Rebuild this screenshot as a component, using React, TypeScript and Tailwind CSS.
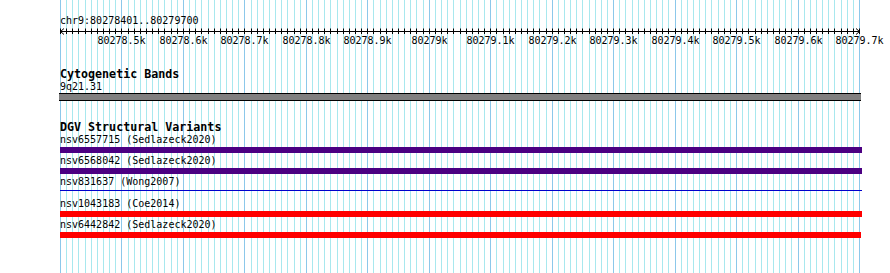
import React from "react";

const X0 = 60;
const X1 = 859;
const STEPS = 130;
const step = (X1 - X0) / STEPS;
const gridX = (k: number) => Math.round(X0 + k * step) + 0.5;

const ticks = Array.from({ length: STEPS + 1 }, (_, k) => k);
const labels = [
  "80278.5k",
  "80278.6k",
  "80278.7k",
  "80278.8k",
  "80278.9k",
  "80279k",
  "80279.1k",
  "80279.2k",
  "80279.3k",
  "80279.4k",
  "80279.5k",
  "80279.6k",
  "80279.7k",
];

type Variant = { name: string; source: string; kind: "bar" | "line"; color: string; width: number };

const variants: Variant[] = [
  { name: "nsv6557715", source: "Sedlazeck2020", kind: "bar", color: "bg-[#4b0082]", width: 802 },
  { name: "nsv6568042", source: "Sedlazeck2020", kind: "bar", color: "bg-[#4b0082]", width: 802 },
  { name: "nsv831637", source: "Wong2007", kind: "line", color: "bg-[#0000cc]", width: 802 },
  { name: "nsv1043183", source: "Coe2014", kind: "bar", color: "bg-[#ff0000]", width: 802 },
  { name: "nsv6442842", source: "Sedlazeck2020", kind: "bar", color: "bg-[#ff0000]", width: 801 },
];

function Grid() {
  return (
    <svg className="absolute inset-0" width={890} height={273}>
      {ticks.map((k) => (
        <line
          key={k}
          x1={gridX(k)}
          x2={gridX(k)}
          y1={0}
          y2={273}
          stroke={k % 10 === 0 ? "#8cc8ea" : "#a8e8ee"}
          strokeWidth={1}
        />
      ))}
    </svg>
  );
}

function Ruler() {
  return (
    <>
      <svg width={830} height={8} className="block">
        <line x1={0} x2={800} y1={4.5} y2={4.5} stroke="#000" />
        <polyline points="4,1.5 0.5,4.5 4,7.5" fill="none" stroke="#000" />
        <polyline points="796,1.5 799.5,4.5 796,7.5" fill="none" stroke="#000" />
        {ticks.map((k) => (
          <line key={k} x1={gridX(k) - X0} x2={gridX(k) - X0} y1={1.5} y2={7} stroke="#000" />
        ))}
      </svg>
      <div className="relative h-[12px]">
        {labels.map((l, i) => (
          <span
            key={l}
            className="absolute top-0 -translate-x-1/2 whitespace-pre"
            style={{ left: gridX((i + 1) * 10) - X0 }}
          >
            {l}
          </span>
        ))}
      </div>
    </>
  );
}

export default function App() {
  return (
    <div className="relative h-[273px] w-[890px] overflow-hidden bg-white font-['DejaVu_Sans_Mono',monospace] text-[10px] leading-[12px] text-black">
      <Grid />
      <div className="relative pl-[60px]">
        <div className="pt-[15px] whitespace-pre">chr9:80278401..80279700</div>
        <Ruler />

        <div className="mt-[21px] text-[11.67px] leading-[13px] font-bold whitespace-pre">Cytogenetic Bands</div>
        <div className="whitespace-pre">9q21.31</div>
        <div className="h-[8px] w-[802px] -ml-[1px] border-y border-black bg-[#808080]" />

        <div className="mt-[20px] text-[11.67px] leading-[13px] font-bold whitespace-pre">DGV Structural Variants</div>
        {variants.map((v, i) => (
          <div key={v.name} className={i === 0 ? "" : "mt-[2px]"}>
            <div className="whitespace-pre">
              {v.name} ({v.source})
            </div>
            <div className="mt-[1px] h-[6px]">
              {v.kind === "bar" ? (
                <div className={`h-[6px] ${v.color}`} style={{ width: v.width }} />
              ) : (
                <div className={`mt-[2px] h-[1px] ${v.color}`} style={{ width: v.width }} />
              )}
            </div>
          </div>
        ))}
      </div>
    </div>
  );
}
